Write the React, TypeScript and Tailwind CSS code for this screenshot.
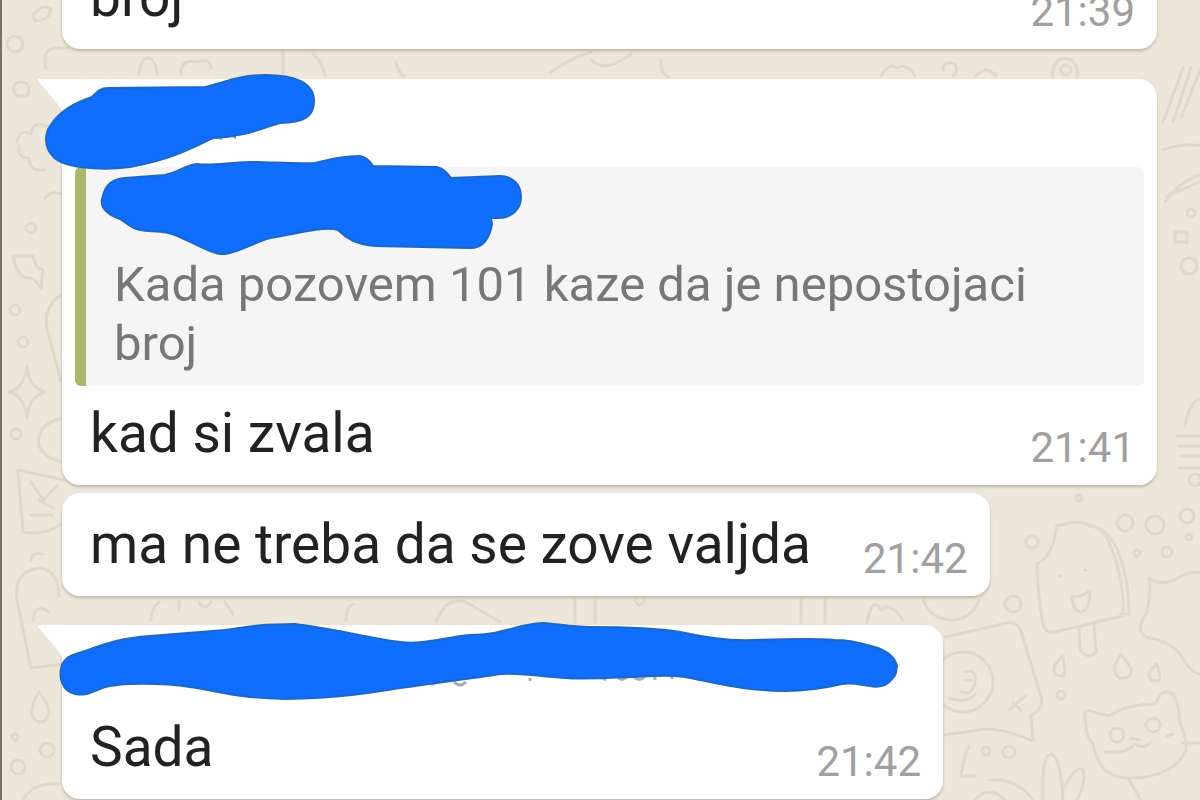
import type { ReactNode } from 'react';
import clsx from 'clsx';

interface BubbleProps {
  tail?: boolean;
  className?: string;
  children: ReactNode;
}

interface MessageRowProps {
  text: string;
  time: string;
}

function Wallpaper() {
  return (
    <svg
      className="absolute inset-0 h-full w-full"
      viewBox="0 0 1200 800"
      preserveAspectRatio="xMidYMid slice"
      fill="none"
      stroke="#e0d8cb"
      strokeWidth="3"
      strokeLinecap="round"
      strokeLinejoin="round"
      aria-hidden="true"
    >
      {/* Left edge */}
      <path d="M32 15 q10 -12 18 -6 q-2 12 -16 12z M45 68 q-4 -18 8 -20 h14 M26 84 q-6 -4 -12 0 q-4 6 2 12 h10 q4 -6 0 -12" />
      <path d="M16 142 q2 -14 14 -8 q2 -14 16 -8 M18 146 q-2 12 10 12 q0 14 16 12 M44 198 q6 -8 16 -4 M12 256 h20 q2 12 10 14 l-2 18 q-8 -12 -16 -10 q-10 -6 -12 -22" />
      <path d="M26 366 q2 22 18 26 q-16 4 -18 26 q-2 -22 -18 -26 q16 -4 18 -26 M60 295 q-18 12 -14 34 l14 52 M60 418 q-26 8 -22 28 q8 14 24 16" />
      <path d="M17 470 l46 10 M17 470 l5 62 q22 4 38 -8 M30 482 l12 18 l14 -14 M38 500 l14 8 M30 515 h22" />
      <path d="M16 600 q-4 -30 24 -32 q18 4 18 28 M16 600 l14 68 l32 -4 M30 560 q0 -8 12 -6 M32 620 q2 -18 16 -8 M38 692 q-12 20 -4 28 q10 6 14 -6 q0 -10 -10 -22 M22 800 q10 -18 36 -16" />
      <circle cx="14" cy="44" r="8" />
      <circle cx="30" cy="228" r="5" />
      <circle cx="14" cy="310" r="5" />
      <circle cx="22" cy="342" r="5" />
      <circle cx="15" cy="434" r="5" />
      <circle cx="17" cy="767" r="7" />
      <circle cx="46" cy="750" r="7" />
      <circle cx="14" cy="737" r="3" />

      {/* Strips between the bubbles */}
      <path d="M138 74 q2 -16 10 -16 q8 4 8 16 M180 74 q0 -16 16 -12 q14 -4 14 6 M282 50 v28 M312 54 q10 8 12 22 M395 62 q2 10 8 14 M550 72 q20 -14 40 -20 M590 60 q14 14 40 -6 M660 60 q-2 10 8 18" />
      <path d="M880 76 q8 -14 16 -8 q10 -6 18 8 M942 70 q0 -10 12 -6 q4 8 -2 12 M975 76 q10 -12 20 0 M1052 78 q-2 -18 12 -20 q14 2 12 20" />
      <path d="M150 620 q0 -12 8 -18 M178 602 v8 M198 602 q4 10 12 0 M224 602 l8 12 M345 620 q0 -14 8 -16 M435 622 q10 -26 30 -20 l34 20 M574 600 v22 M594 600 v22 M634 600 q4 10 10 0 M800 600 v22 M824 600 v22 M866 622 q6 -28 14 -12 q8 -10 22 10 M922 600 q8 20 30 20 q20 -2 26 -20" />
      <circle cx="1065" cy="70" r="5" />

      {/* Right edge */}
      <path d="M1162 122 l20 -54 M1172 122 l18 -54 M1180 118 l20 -50 M1162 150 q20 -8 38 -4 M1164 202 q14 -20 36 -28 M1166 196 l32 -14 M1184 426 q4 -24 16 -28 M1176 436 h24 M1178 446 h22 M1180 456 h20 M1178 468 h22" />
      <circle cx="1190" cy="213" r="4" />
      <rect x="1174" y="232" width="12" height="10" />
      <circle cx="1188" cy="266" r="8" />
      <circle cx="1194" cy="480" r="6" />

      {/* Ice cream bar */}
      <path d="M1056 526 q30 -10 48 8 q20 40 18 82 l-68 16 q-10 2 -12 -8 q-6 -32 -6 -60 q10 -4 16 -20 q2 -8 4 -18 M1088 526 q24 2 34 40 q6 22 6 48 h-8 M1078 628 l1 22 q8 10 16 2 l-2 -28" />
      <path d="M1058 576 h1 M1084 570 h1 M1071 596 q10 2 18 -6 q0 22 -10 22 q-8 -2 -8 -16" />

      {/* Torn sign and drops */}
      <path d="M1200 572 q-18 0 -26 8 q-16 6 -26 -2 q2 16 -2 34 q-14 20 2 26 q26 4 36 24 q8 12 16 12" />
      <path d="M1062 656 q-12 10 -8 18 q10 6 10 -4z M1120 654 q-12 16 -2 24 q14 2 12 -10z M1156 664 q-12 8 -6 16 q12 4 8 -8z" />
      <circle cx="1124" cy="523" r="8" />
      <circle cx="1154" cy="525" r="9" />
      <circle cx="1186" cy="516" r="7" />
      <circle cx="1166" cy="552" r="5" />
      <circle cx="1136" cy="553" r="3" />
      <circle cx="1188" cy="537" r="3" />
      <circle cx="1031" cy="542" r="6" />
      <circle cx="1012" cy="604" r="8" />
      <circle cx="1060" cy="695" r="4" />
      <circle cx="1078" cy="498" r="3" />

      {/* Card with a coin */}
      <path d="M944 637 l62 -14 q10 -2 14 8 l20 66 q4 12 -10 18 l2 26 q-36 -16 -60 -10 l-28 4 M1012 702 l8 8 M1008 710 l16 -14" />
      <circle cx="962" cy="682" r="30" />
      <path d="M964 672 q12 -4 10 10 q-2 14 -14 10 M948 698 q18 6 26 -4 M964 680 h6" />
      <path d="M960 776 q4 -24 8 -30 M960 776 h14 M988 780 q28 -2 44 20 M974 800 q14 -16 30 0" />
      <circle cx="985" cy="751" r="4" />
      <circle cx="1008" cy="752" r="6" />

      {/* Rabbit ears */}
      <path d="M1042 800 q-2 -44 8 -46 q10 4 12 46 M1062 790 q12 -26 20 -20 q4 10 -6 30" />

      {/* Cat */}
      <path d="M1084 714 q0 -6 8 -2 l16 4 q18 -12 46 -12 q6 -14 14 -12 q10 4 10 28 q12 28 4 36 q-16 22 -54 22 q-30 0 -36 -34 q-8 -8 -8 -30 M1182 743 h18 M1128 780 l12 20" />
      <circle cx="1116" cy="735" r="7" />
      <circle cx="1152" cy="725" r="7" />
      <path d="M1130 738 l8 2 M1104 752 q22 2 30 -8 q8 6 16 -2 M1166 736 l6 -2" />
    </svg>
  );
}

function Bubble({ tail = false, className, children }: BubbleProps) {
  return (
    <li
      className={clsx(
        'relative rounded-[18px] bg-[#fefefe] pb-3 shadow-[0_2px_3px_rgba(80,80,60,0.3)]',
        tail && 'rounded-tl-none',
        className
      )}
    >
      {tail && (
        <svg
          className="absolute top-0 -left-6 h-8 w-6"
          viewBox="0 0 24 32"
          aria-hidden="true"
        >
          <path d="M1 0H24V32Q22 28 18 23L1 3Q-1 0 1 0Z" fill="#fefefe" />
        </svg>
      )}
      {children}
    </li>
  );
}

function MessageRow({ text, time }: MessageRowProps) {
  return (
    <div className="flex items-end justify-between gap-[52px] pr-[22px] pl-7 whitespace-nowrap">
      <p className="pb-2 text-[55px] leading-[64px] text-[#222]">{text}</p>
      <time className="text-[42px] leading-[50px] text-[#a0a0a0]">{time}</time>
    </div>
  );
}

export default function App() {
  return (
    <main className="relative min-h-screen overflow-hidden border-l-2 border-[#7c726b] bg-[#ede6da] pr-[43px] pl-[60px] font-['Roboto',sans-serif]">
      <Wallpaper />

      <ul className="relative flex flex-col items-start">
        <Bubble className="-mt-[35px] w-full">
          <MessageRow text="broj" time="21:39" />
        </Bubble>

        {/* Reply with a quoted message */}
        <Bubble tail className="mt-[30px] w-full">
          <div className="h-[88px]">
            <svg
              className="absolute -top-[9px] -left-[22px] z-10 h-[105px] w-[290px]"
              viewBox="40 70 290 105"
              fill="#106efe"
              stroke="#1d68c4"
              strokeWidth="2"
              aria-hidden="true"
            >
              <path d="M216 138l6 -1v3zM228 135l8 1v3z" fill="#8a93c0" stroke="none" />
              <path d="M108 88L205 87C225 82 240 75 265 75C295 75 314 83 314 101C314 117 303 123 280 123C262 128 245 137 213 138C195 147 170 160 130 167C100 171 60 168 52 155C45 148 44 135 50 126C60 110 75 103 92 97C97 92 100 88 108 88Z" />
            </svg>
          </div>
          <blockquote className="relative mx-[13px] rounded-md border-l-[11px] border-[#a9b967] bg-[#f5f5f5] pt-[88px] pr-10 pb-[13px] pl-7">
            <svg
              className="absolute -top-[17px] left-[9px] h-[110px] w-[440px]"
              viewBox="95 150 440 110"
              fill="#106efe"
              stroke="#1d68c4"
              strokeWidth="2"
              aria-hidden="true"
            >
              <path d="M104 192C108 182 115 179 125 178L165 175C180 172 185 165 197 164C210 166 225 163 250 162C270 162 295 164 315 163C335 158 345 156 360 156C366 157 370 161 373 166L437 167C443 168 447 173 451 178L500 176C513 176 521 185 521 197C521 209 512 218 498 218L491 218L492 224C490 236 485 248 470 248L375 246C355 244 346 238 338 230C325 226 305 232 270 238C255 242 240 252 225 254C212 255 195 243 175 235C165 230 150 232 140 230C130 228 126 222 120 219C108 215 100 208 102 199Z" />
            </svg>
            <p className="text-[49px] leading-[59px] text-[#777]">
              Kada pozovem 101 kaze da je nepostojaci broj
            </p>
          </blockquote>
          <div className="pt-[15px]">
            <MessageRow text="kad si zvala" time="21:41" />
          </div>
        </Bubble>

        <Bubble className="mt-2 pt-[19px]">
          <MessageRow text="ma ne treba da se zove valjda" time="21:42" />
        </Bubble>

        <Bubble tail className="mt-[29px]">
          <div className="h-[90px] w-[881px]">
            <svg
              className="absolute -top-[5px] -left-[7px] h-[85px] w-[850px]"
              viewBox="55 620 850 85"
              fill="#106efe"
              stroke="#1d68c4"
              strokeWidth="2"
              aria-hidden="true"
            >
              <path
                d="M428 682q4 4 8 0M454 682q6 6 12 0M530 678v3M600 676l6 4M618 677q4 5 9 0M634 677q6 5 10 0M655 677v3M672 676v3"
                fill="none"
                stroke="#a8adba"
                strokeWidth="3"
              />
              <path d="M62 665C66 656 75 654 85 651C105 644 120 638 150 636L225 630C250 626 265 624 295 624C330 628 370 638 400 642C425 645 445 637 470 635C505 635 515 624 543 623C560 624 570 627 590 627C615 627 650 627 680 632C705 637 725 641 755 640C785 639 810 638 835 640C855 640 865 645 878 648C890 653 895 658 897 666C896 672 896 676 892 679C887 686 880 688 870 686C860 685 853 682 842 684C825 688 805 691 785 691C745 690 730 686 700 680C685 676 672 675 655 676C620 677 590 680 565 678C540 677 520 672 500 674C470 679 440 682 400 688C370 693 340 698 285 699C235 698 220 691 190 687C165 683 120 682 102 688C90 693 85 696 75 694C62 691 58 677 62 665Z" />
            </svg>
          </div>
          <MessageRow text="Sada" time="21:42" />
        </Bubble>
      </ul>
    </main>
  );
}
